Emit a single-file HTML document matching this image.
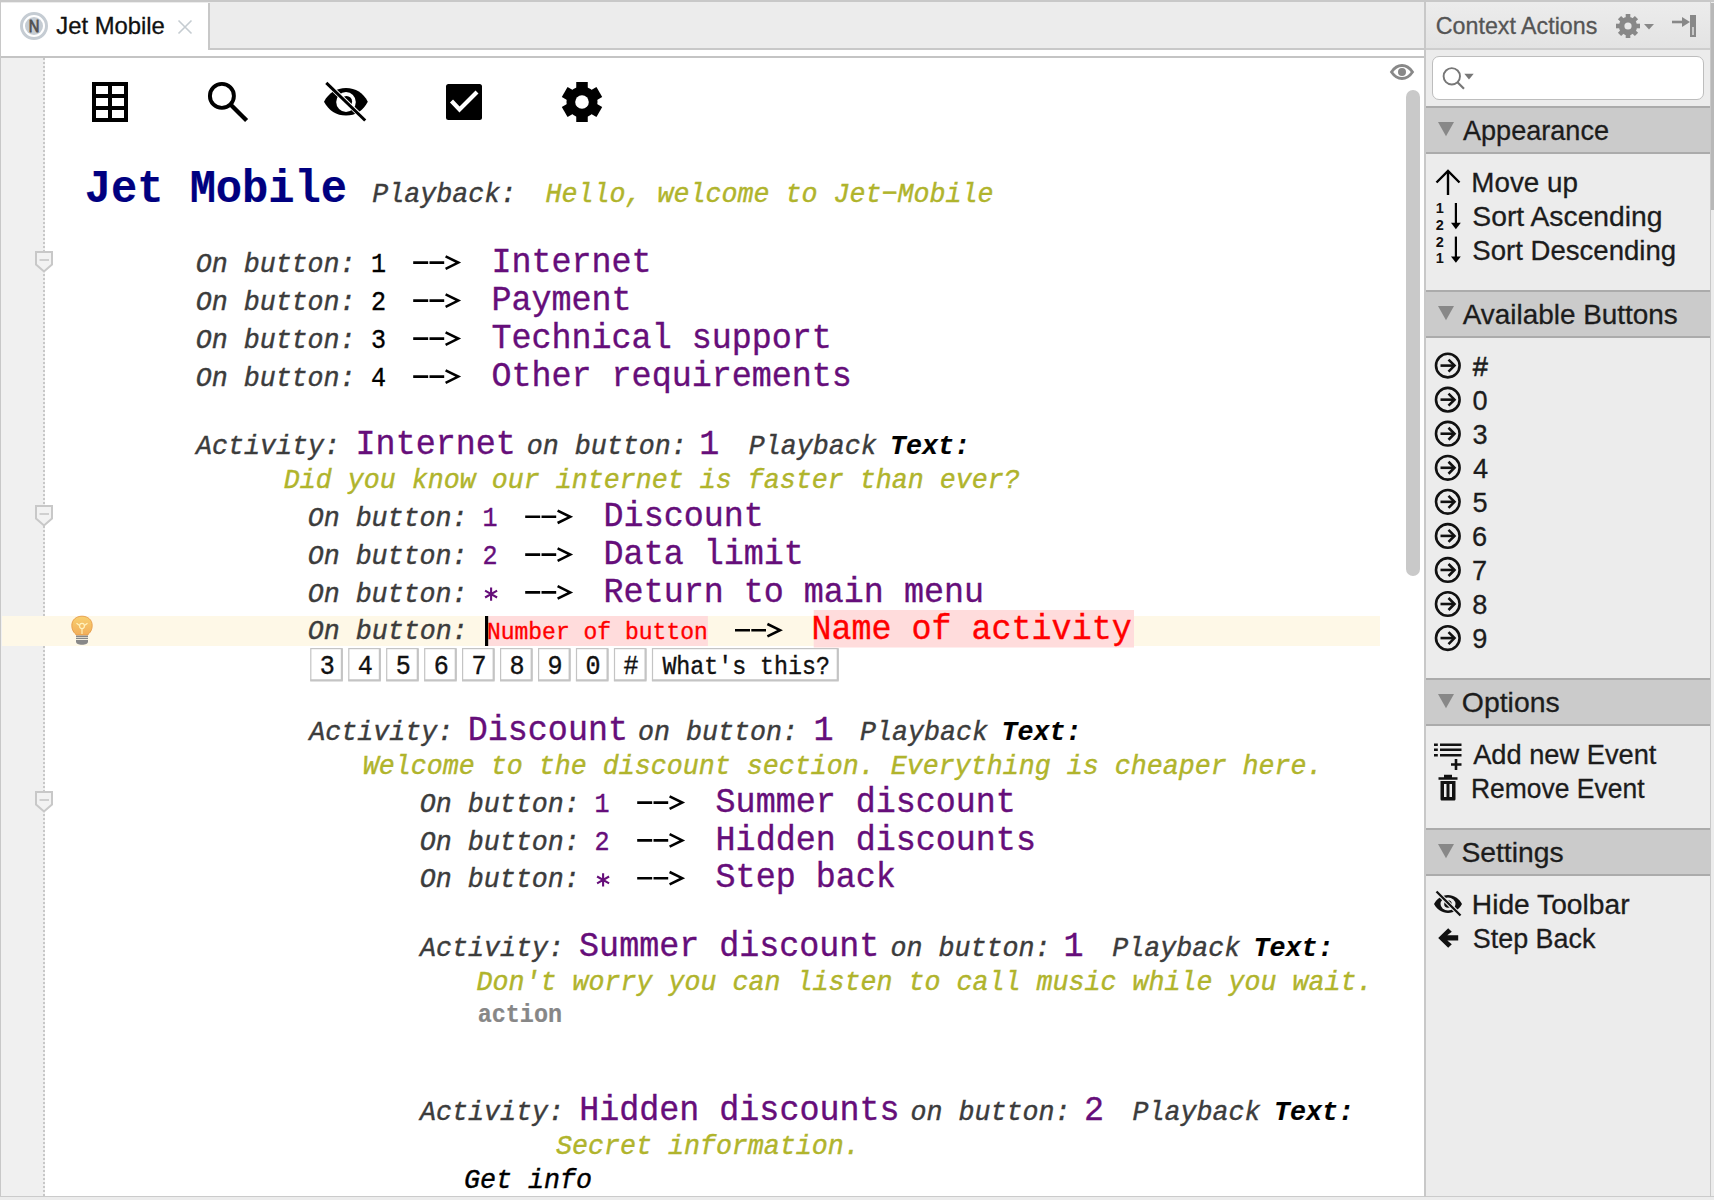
<!DOCTYPE html>
<html><head><meta charset="utf-8"><title>Jet Mobile</title>
<style>
html,body{margin:0;padding:0;}
body{width:1714px;height:1200px;position:relative;overflow:hidden;background:#ececec;font-family:"Liberation Sans",sans-serif;}
.abs{position:absolute;}
svg{position:absolute;left:0;top:0;}
text{white-space:pre;}
.m{font-family:"Liberation Mono",monospace;}
.mi{font-family:"Liberation Mono",monospace;font-style:italic;}
.mb{font-family:"Liberation Mono",monospace;font-weight:bold;}
.mbi{font-family:"Liberation Mono",monospace;font-weight:bold;font-style:italic;}
.s{font-family:"Liberation Sans",sans-serif;}
.sb{font-family:"Liberation Sans",sans-serif;font-weight:bold;}
</style></head>
<body>

<div class="abs" style="left:0;top:0;width:1714px;height:2px;background:#c8c8c8"></div>
<div class="abs" style="left:0;top:0;width:1px;height:1197px;background:#c8c8c8"></div>
<div class="abs" style="left:210px;top:48px;width:1214px;height:2px;background:#c8c8c8"></div>
<div class="abs" style="left:1px;top:3px;width:207px;height:53px;background:#fff"></div>
<div class="abs" style="left:208px;top:3px;width:2px;height:47px;background:#c8c8c8"></div>
<div class="abs" style="left:1px;top:50px;width:1423px;height:6px;background:#fff"></div>
<div class="abs" style="left:1px;top:56px;width:1423px;height:2px;background:#c4c4c4"></div>
<div class="abs" style="left:1px;top:58px;width:44px;height:1138px;background:#f0f0f0"></div>
<div class="abs" style="left:45px;top:58px;width:1379px;height:1138px;background:#fff"></div>
<div class="abs" style="left:0;top:1196px;width:1714px;height:1px;background:#cbcbcb"></div>
<div class="abs" style="left:1424px;top:2px;width:2px;height:1195px;background:#c8c8c8"></div>
<div class="abs" style="left:1426px;top:3px;width:284px;height:45px;background:linear-gradient(#ececec,#e3e3e3)"></div>
<div class="abs" style="left:1426px;top:48px;width:284px;height:2px;background:#cdcdcd"></div>
<div class="abs" style="left:1710px;top:2px;width:1px;height:1195px;background:#c8c8c8"></div>
<div class="abs" style="left:1711px;top:3px;width:3px;height:207px;background:#b8b8b8"></div>

<svg width="1714" height="1200" viewBox="0 0 1714 1200">
<line x1="44" y1="58" x2="44" y2="1196" stroke="#c8c8c8" stroke-width="2" stroke-dasharray="2 2"/>
<rect x="2" y="616" width="1378" height="30" fill="#fef8e7"/>
<rect x="488.5" y="616" width="219.4" height="30" fill="#ffdcdc"/>
<rect x="813.7" y="610" width="320.3" height="37.5" fill="#ffdcdc"/>
<rect x="485" y="616" width="3.2" height="30" fill="#000"/>
<rect x="310.8" y="648.6" width="31.4" height="31.5" fill="#fff" stroke="#c4c4c4" stroke-width="1.2"/>
<path d="M341.8 649V680.6H310.2" stroke="#c4c4c4" stroke-width="2" fill="none"/>
<rect x="348.8" y="648.6" width="31.4" height="31.5" fill="#fff" stroke="#c4c4c4" stroke-width="1.2"/>
<path d="M379.8 649V680.6H348.2" stroke="#c4c4c4" stroke-width="2" fill="none"/>
<rect x="386.7" y="648.6" width="31.4" height="31.5" fill="#fff" stroke="#c4c4c4" stroke-width="1.2"/>
<path d="M417.7 649V680.6H386.1" stroke="#c4c4c4" stroke-width="2" fill="none"/>
<rect x="424.7" y="648.6" width="31.4" height="31.5" fill="#fff" stroke="#c4c4c4" stroke-width="1.2"/>
<path d="M455.7 649V680.6H424.1" stroke="#c4c4c4" stroke-width="2" fill="none"/>
<rect x="462.6" y="648.6" width="31.4" height="31.5" fill="#fff" stroke="#c4c4c4" stroke-width="1.2"/>
<path d="M493.6 649V680.6H462.0" stroke="#c4c4c4" stroke-width="2" fill="none"/>
<rect x="500.6" y="648.6" width="31.4" height="31.5" fill="#fff" stroke="#c4c4c4" stroke-width="1.2"/>
<path d="M531.6 649V680.6H500.0" stroke="#c4c4c4" stroke-width="2" fill="none"/>
<rect x="538.6" y="648.6" width="31.4" height="31.5" fill="#fff" stroke="#c4c4c4" stroke-width="1.2"/>
<path d="M569.6 649V680.6H538.0" stroke="#c4c4c4" stroke-width="2" fill="none"/>
<rect x="576.5" y="648.6" width="31.4" height="31.5" fill="#fff" stroke="#c4c4c4" stroke-width="1.2"/>
<path d="M607.5 649V680.6H575.9" stroke="#c4c4c4" stroke-width="2" fill="none"/>
<rect x="614.5" y="648.6" width="31.4" height="31.5" fill="#fff" stroke="#c4c4c4" stroke-width="1.2"/>
<path d="M645.5 649V680.6H613.9" stroke="#c4c4c4" stroke-width="2" fill="none"/>
<rect x="652.5" y="648.6" width="185.6" height="31.5" fill="#fff" stroke="#c4c4c4" stroke-width="1.2"/>
<path d="M837.7 649V680.6H651.9" stroke="#c4c4c4" stroke-width="2" fill="none"/>
<path d="M36 252.0H52V264.5L44 271.5L36 264.5Z" fill="#f2f2f2" stroke="#c8c8c8" stroke-width="2"/>
<rect x="39.5" y="259.0" width="9.5" height="2" fill="#cfcfcf"/>
<path d="M36 506.0H52V518.5L44 525.5L36 518.5Z" fill="#f2f2f2" stroke="#c8c8c8" stroke-width="2"/>
<rect x="39.5" y="513.0" width="9.5" height="2" fill="#cfcfcf"/>
<path d="M36 792.0H52V804.5L44 811.5L36 804.5Z" fill="#f2f2f2" stroke="#c8c8c8" stroke-width="2"/>
<rect x="39.5" y="799.0" width="9.5" height="2" fill="#cfcfcf"/>
<g>
<defs><linearGradient id="bulb" x1="0" y1="0" x2="0" y2="1"><stop offset="0" stop-color="#f8d070"/><stop offset="1" stop-color="#f2ae5a"/></linearGradient></defs>
<path d="M76 634.5C72.5 631.5 71.8 628 71.8 625.5C71.8 619.8 76.2 616.2 82 616.2C87.8 616.2 92.2 619.8 92.2 625.5C92.2 628 91.5 631.5 88 634.5L88 635H76Z" fill="url(#bulb)" stroke="#e59a45" stroke-width="0.9"/>
<path d="M76.5 623.2L79.6 625.5M87.5 623.2L84.4 625.5M82 629V634" stroke="#fff4c0" stroke-width="1.1" fill="none"/>
<ellipse cx="82" cy="626" rx="2.4" ry="2.6" fill="none" stroke="#fff4c0" stroke-width="1.1"/>
<rect x="76" y="635.6" width="12" height="1.4" fill="#888"/>
<rect x="76" y="637.7" width="12" height="1.4" fill="#888"/>
<path d="M76 640H88V641.5C88 643.6 85.5 644.8 82 644.8C78.5 644.8 76 643.6 76 641.5Z" fill="#888"/>
</g>
<path fill-rule="evenodd" fill="#000" d="M92 82H128V122H92ZM96 86V94H108V86ZM112 86V94H124V86ZM96 98V106H108V98ZM112 98V106H124V98ZM96 110V118H108V110ZM112 110V118H124V110Z"/>
<circle cx="221.9" cy="95.9" r="12" fill="none" stroke="#000" stroke-width="3.9"/>
<path d="M230 104L246.6 120.6" stroke="#000" stroke-width="4.3"/>
<g>
<defs><clipPath id="eoclip"><path d="M276 34L420 34L420 173.6Z"/></clipPath></defs>
<path d="M324 101.7C328.5 93 336.5 88 346 88C355.5 88 363.5 93 367.8 101.7C363.5 110.5 355.5 115.5 346 115.5C336.5 115.5 328.5 110.5 324 101.7Z" fill="#000"/>
<ellipse cx="346" cy="102" rx="9.8" ry="10" fill="#fff"/>
<circle cx="346.5" cy="101.5" r="5.6" fill="#000" clip-path="url(#eoclip)"/>
<path d="M325.5 82L366 121" stroke="#fff" stroke-width="4.6"/>
<path d="M326.3 82.8L365.2 120.5" stroke="#000" stroke-width="3"/>
</g>
<rect x="446" y="84" width="36" height="36" rx="2.5" fill="#000"/>
<path d="M451.5 101L459.5 109.5L477 92" stroke="#fff" stroke-width="4.2" fill="none"/>
<circle cx="582.00" cy="102.00" r="15.50" fill="#000"/>
<rect x="576.25" y="82.00" width="11.50" height="6.50" fill="#000" transform="rotate(0.00 582.00 102.00)"/>
<rect x="576.25" y="82.00" width="11.50" height="6.50" fill="#000" transform="rotate(60.00 582.00 102.00)"/>
<rect x="576.25" y="82.00" width="11.50" height="6.50" fill="#000" transform="rotate(120.00 582.00 102.00)"/>
<rect x="576.25" y="82.00" width="11.50" height="6.50" fill="#000" transform="rotate(180.00 582.00 102.00)"/>
<rect x="576.25" y="82.00" width="11.50" height="6.50" fill="#000" transform="rotate(240.00 582.00 102.00)"/>
<rect x="576.25" y="82.00" width="11.50" height="6.50" fill="#000" transform="rotate(300.00 582.00 102.00)"/>
<circle cx="582.00" cy="102.00" r="6.80" fill="#fff"/>
<path d="M1391.5 72C1394.5 67.5 1398 65.5 1402 65.5C1406 65.5 1409.5 67.5 1412.5 72C1409.5 76.5 1406 78.5 1402 78.5C1398 78.5 1394.5 76.5 1391.5 72Z" fill="none" stroke="#888" stroke-width="2.8"/>
<circle cx="1402" cy="72" r="4" fill="#888"/>
<rect x="1406" y="90" width="14" height="486" rx="7" fill="#c9c9c9"/>
<circle cx="1628.00" cy="26.00" r="9.20" fill="#888"/>
<rect x="1625.70" y="14.00" width="4.60" height="4.80" fill="#888" transform="rotate(0.00 1628.00 26.00)"/>
<rect x="1625.70" y="14.00" width="4.60" height="4.80" fill="#888" transform="rotate(45.00 1628.00 26.00)"/>
<rect x="1625.70" y="14.00" width="4.60" height="4.80" fill="#888" transform="rotate(90.00 1628.00 26.00)"/>
<rect x="1625.70" y="14.00" width="4.60" height="4.80" fill="#888" transform="rotate(135.00 1628.00 26.00)"/>
<rect x="1625.70" y="14.00" width="4.60" height="4.80" fill="#888" transform="rotate(180.00 1628.00 26.00)"/>
<rect x="1625.70" y="14.00" width="4.60" height="4.80" fill="#888" transform="rotate(225.00 1628.00 26.00)"/>
<rect x="1625.70" y="14.00" width="4.60" height="4.80" fill="#888" transform="rotate(270.00 1628.00 26.00)"/>
<rect x="1625.70" y="14.00" width="4.60" height="4.80" fill="#888" transform="rotate(315.00 1628.00 26.00)"/>
<circle cx="1628.00" cy="26.00" r="3.60" fill="#e8e8e8"/>
<path d="M1644 24H1654L1649 29.5Z" fill="#888"/>
<path d="M1672 22H1684" stroke="#888" stroke-width="2.6"/>
<path d="M1682 17L1690 22L1682 27Z" fill="#888"/>
<path fill-rule="evenodd" fill="#888" d="M1690 15H1696V37H1690ZM1692.3 27V35H1693.7V27Z"/>
<rect x="1432.5" y="56.5" width="271" height="43" rx="6.5" fill="#fff" stroke="#bdbdbd" stroke-width="1"/>
<circle cx="1451.8" cy="76.3" r="8.2" fill="none" stroke="#777" stroke-width="1.9"/>
<path d="M1457.5 82.3L1464 88.8" stroke="#777" stroke-width="2.2"/>
<path d="M1464.3 73.8H1473.7L1469 79.5Z" fill="#777"/>
<rect x="1426" y="106" width="284" height="48" fill="#cbcbcb"/>
<rect x="1426" y="106" width="284" height="2" fill="#ababab"/>
<rect x="1426" y="152" width="284" height="2" fill="#ababab"/>
<path d="M1438 122.0H1454L1446 136.3Z" fill="#888"/>
<rect x="1426" y="290" width="284" height="48" fill="#cbcbcb"/>
<rect x="1426" y="290" width="284" height="2" fill="#ababab"/>
<rect x="1426" y="336" width="284" height="2" fill="#ababab"/>
<path d="M1438 306.0H1454L1446 320.3Z" fill="#888"/>
<rect x="1426" y="678" width="284" height="48" fill="#cbcbcb"/>
<rect x="1426" y="678" width="284" height="2" fill="#ababab"/>
<rect x="1426" y="724" width="284" height="2" fill="#ababab"/>
<path d="M1438 694.0H1454L1446 708.3Z" fill="#888"/>
<rect x="1426" y="828" width="284" height="48" fill="#cbcbcb"/>
<rect x="1426" y="828" width="284" height="2" fill="#ababab"/>
<rect x="1426" y="874" width="284" height="2" fill="#ababab"/>
<path d="M1438 844.0H1454L1446 858.3Z" fill="#888"/>
<path d="M1448 171V195" stroke="#000" stroke-width="2.4"/>
<path d="M1436.5 182.5L1448 171L1459.5 182.5" stroke="#000" stroke-width="2.4" fill="none"/>
<text class="sb" x="1435.8" y="213.1" font-size="14.5" fill="#111">1</text>
<text class="sb" x="1435.8" y="229.6" font-size="14.5" fill="#111">2</text>
<path d="M1455.9 203.0V224.0" stroke="#000" stroke-width="2.2"/>
<path d="M1451 222.8H1460.8L1455.9 229.2Z" fill="#000"/>
<text class="sb" x="1435.8" y="246.7" font-size="14.5" fill="#111">2</text>
<text class="sb" x="1435.8" y="263.2" font-size="14.5" fill="#111">1</text>
<path d="M1455.9 236.6V257.6" stroke="#000" stroke-width="2.2"/>
<path d="M1451 256.4H1460.8L1455.9 262.8Z" fill="#000"/>
<circle cx="1447.8" cy="365.60" r="11.8" fill="none" stroke="#111" stroke-width="2.6"/>
<path d="M1440.5 365.60H1454" stroke="#111" stroke-width="2.6"/>
<path d="M1448.5 359.60L1454.5 365.60L1448.5 371.60" stroke="#111" stroke-width="2.6" fill="none"/>
<circle cx="1447.8" cy="399.66" r="11.8" fill="none" stroke="#111" stroke-width="2.6"/>
<path d="M1440.5 399.66H1454" stroke="#111" stroke-width="2.6"/>
<path d="M1448.5 393.66L1454.5 399.66L1448.5 405.66" stroke="#111" stroke-width="2.6" fill="none"/>
<circle cx="1447.8" cy="433.72" r="11.8" fill="none" stroke="#111" stroke-width="2.6"/>
<path d="M1440.5 433.72H1454" stroke="#111" stroke-width="2.6"/>
<path d="M1448.5 427.72L1454.5 433.72L1448.5 439.72" stroke="#111" stroke-width="2.6" fill="none"/>
<circle cx="1447.8" cy="467.78" r="11.8" fill="none" stroke="#111" stroke-width="2.6"/>
<path d="M1440.5 467.78H1454" stroke="#111" stroke-width="2.6"/>
<path d="M1448.5 461.78L1454.5 467.78L1448.5 473.78" stroke="#111" stroke-width="2.6" fill="none"/>
<circle cx="1447.8" cy="501.84" r="11.8" fill="none" stroke="#111" stroke-width="2.6"/>
<path d="M1440.5 501.84H1454" stroke="#111" stroke-width="2.6"/>
<path d="M1448.5 495.84L1454.5 501.84L1448.5 507.84" stroke="#111" stroke-width="2.6" fill="none"/>
<circle cx="1447.8" cy="535.90" r="11.8" fill="none" stroke="#111" stroke-width="2.6"/>
<path d="M1440.5 535.90H1454" stroke="#111" stroke-width="2.6"/>
<path d="M1448.5 529.90L1454.5 535.90L1448.5 541.90" stroke="#111" stroke-width="2.6" fill="none"/>
<circle cx="1447.8" cy="569.96" r="11.8" fill="none" stroke="#111" stroke-width="2.6"/>
<path d="M1440.5 569.96H1454" stroke="#111" stroke-width="2.6"/>
<path d="M1448.5 563.96L1454.5 569.96L1448.5 575.96" stroke="#111" stroke-width="2.6" fill="none"/>
<circle cx="1447.8" cy="604.02" r="11.8" fill="none" stroke="#111" stroke-width="2.6"/>
<path d="M1440.5 604.02H1454" stroke="#111" stroke-width="2.6"/>
<path d="M1448.5 598.02L1454.5 604.02L1448.5 610.02" stroke="#111" stroke-width="2.6" fill="none"/>
<circle cx="1447.8" cy="638.08" r="11.8" fill="none" stroke="#111" stroke-width="2.6"/>
<path d="M1440.5 638.08H1454" stroke="#111" stroke-width="2.6"/>
<path d="M1448.5 632.08L1454.5 638.08L1448.5 644.08" stroke="#111" stroke-width="2.6" fill="none"/>
<path d="M1434 744.7H1437.8M1434 749.7H1437.8M1434 755.2H1437.8" stroke="#111" stroke-width="2.6"/>
<path d="M1440 744.7H1461.5M1440 749.7H1461.5M1440 755.2H1461.5" stroke="#111" stroke-width="2.6"/>
<path d="M1451 764.5H1461.5M1456 759V770" stroke="#111" stroke-width="2.6"/>
<path d="M1438.5 778.5H1457.5M1444 776H1452" stroke="#111" stroke-width="2.4"/>
<path fill-rule="evenodd" fill="#111" d="M1440.5 781H1455.5V799C1455.5 800 1454.8 800.5 1454 800.5H1442C1441.2 800.5 1440.5 800 1440.5 799ZM1444 784V797H1446.5V784ZM1449.5 784V797H1452V784Z"/>
<g>
<path d="M1434 904C1437 898.5 1442 895 1448 895C1454 895 1459 898.5 1462 904C1459 909.5 1454 913 1448 913C1442 913 1437 909.5 1434 904Z" fill="#111"/>
<ellipse cx="1448" cy="904" rx="7.5" ry="6.5" fill="#ececec"/>
<circle cx="1448" cy="904" r="3.8" fill="#111"/>
<path d="M1436 891L1461 916" stroke="#ececec" stroke-width="4.5"/>
<path d="M1436.5 891.5L1460.5 915.5" stroke="#111" stroke-width="2.3"/>
</g>
<path d="M1438.2 938L1448.2 928.3L1451.8 931.8L1447.3 935.3H1458.2V940.6H1447.3L1451.8 944.2L1448.2 947.8Z" fill="#111"/>
<circle cx="34" cy="26" r="12.5" fill="none" stroke="#c5ccd3" stroke-width="3"/>
<circle cx="34" cy="26" r="9" fill="#c5ccd3"/>
<text class="s" x="34" y="31.9" font-size="17.4" fill="#505050" stroke="#505050" stroke-width="0.8" text-anchor="middle" transform="matrix(0.85,0,0,1,5.1,0)">N</text>
<path d="M178.5 20.5L191.5 33.5M191.5 20.5L178.5 33.5" stroke="#c5ccd1" stroke-width="1.6"/>
<text class="mb" x="84.68" y="202.00" font-size="43.74" fill="#000080" transform="matrix(1,0,0,1.0700,0,-14.140)" stroke="#000080" stroke-width="0.20">Jet Mobile</text>
<text class="mi" x="372.34" y="202.20" font-size="26.67" fill="#3c3c3c" transform="matrix(1,0,0,1.0700,0,-14.154)" stroke="#3c3c3c" stroke-width="0.40">Playback:</text>
<text class="mi" x="545.60" y="202.20" font-size="26.67" fill="#b0b42c" transform="matrix(1,0,0,1.0700,0,-14.154)" stroke="#b0b42c" stroke-width="0.40">Hello, welcome to Jet−Mobile</text>
<text class="mi" x="195.64" y="271.90" font-size="26.67" fill="#3c3c3c" transform="matrix(1,0,0,1.0700,0,-19.033)" stroke="#3c3c3c" stroke-width="0.40">On button:</text>
<text class="m" x="371.00" y="271.90" font-size="25.08" fill="#000000" transform="matrix(1,0,0,1.0700,0,-19.033)" stroke="#000000" stroke-width="0.35">1</text>
<path d="M413.2 262.6H428.2M429.5 262.6H444.2" stroke="#000" stroke-width="2.6" fill="none"/>
<path d="M445.6 256.4L458.2 262.6L445.6 268.8" stroke="#000" stroke-width="2.6" fill="none" stroke-linejoin="miter"/>
<text class="m" x="491.50" y="271.90" font-size="33.38" fill="#660e7a" transform="matrix(1,0,0,1.0700,0,-19.033)" stroke="#660e7a" stroke-width="0.35">Internet</text>
<text class="mi" x="195.64" y="309.90" font-size="26.67" fill="#3c3c3c" transform="matrix(1,0,0,1.0700,0,-21.693)" stroke="#3c3c3c" stroke-width="0.40">On button:</text>
<text class="m" x="371.00" y="309.90" font-size="25.08" fill="#000000" transform="matrix(1,0,0,1.0700,0,-21.693)" stroke="#000000" stroke-width="0.35">2</text>
<path d="M413.2 300.6H428.2M429.5 300.6H444.2" stroke="#000" stroke-width="2.6" fill="none"/>
<path d="M445.6 294.4L458.2 300.6L445.6 306.8" stroke="#000" stroke-width="2.6" fill="none" stroke-linejoin="miter"/>
<text class="m" x="491.50" y="309.90" font-size="33.38" fill="#660e7a" transform="matrix(1,0,0,1.0700,0,-21.693)" stroke="#660e7a" stroke-width="0.35">Payment</text>
<text class="mi" x="195.64" y="347.90" font-size="26.67" fill="#3c3c3c" transform="matrix(1,0,0,1.0700,0,-24.353)" stroke="#3c3c3c" stroke-width="0.40">On button:</text>
<text class="m" x="371.00" y="347.90" font-size="25.08" fill="#000000" transform="matrix(1,0,0,1.0700,0,-24.353)" stroke="#000000" stroke-width="0.35">3</text>
<path d="M413.2 338.6H428.2M429.5 338.6H444.2" stroke="#000" stroke-width="2.6" fill="none"/>
<path d="M445.6 332.4L458.2 338.6L445.6 344.8" stroke="#000" stroke-width="2.6" fill="none" stroke-linejoin="miter"/>
<text class="m" x="491.50" y="347.90" font-size="33.38" fill="#660e7a" transform="matrix(1,0,0,1.0700,0,-24.353)" stroke="#660e7a" stroke-width="0.35">Technical support</text>
<text class="mi" x="195.64" y="385.90" font-size="26.67" fill="#3c3c3c" transform="matrix(1,0,0,1.0700,0,-27.013)" stroke="#3c3c3c" stroke-width="0.40">On button:</text>
<text class="m" x="371.00" y="385.90" font-size="25.08" fill="#000000" transform="matrix(1,0,0,1.0700,0,-27.013)" stroke="#000000" stroke-width="0.35">4</text>
<path d="M413.2 376.6H428.2M429.5 376.6H444.2" stroke="#000" stroke-width="2.6" fill="none"/>
<path d="M445.6 370.4L458.2 376.6L445.6 382.8" stroke="#000" stroke-width="2.6" fill="none" stroke-linejoin="miter"/>
<text class="m" x="491.50" y="385.90" font-size="33.38" fill="#660e7a" transform="matrix(1,0,0,1.0700,0,-27.013)" stroke="#660e7a" stroke-width="0.35">Other requirements</text>
<text class="mi" x="195.90" y="453.60" font-size="26.67" fill="#3c3c3c" transform="matrix(1,0,0,1.0700,0,-31.752)" stroke="#3c3c3c" stroke-width="0.40">Activity:</text>
<text class="m" x="355.60" y="453.60" font-size="33.38" fill="#660e7a" transform="matrix(1,0,0,1.0700,0,-31.752)" stroke="#660e7a" stroke-width="0.35">Internet</text>
<text class="mi" x="526.70" y="453.60" font-size="26.67" fill="#3c3c3c" transform="matrix(1,0,0,1.0700,0,-31.752)" stroke="#3c3c3c" stroke-width="0.40">on button:</text>
<text class="m" x="699.20" y="453.60" font-size="33.38" fill="#660e7a" transform="matrix(1,0,0,1.0700,0,-31.752)" stroke="#660e7a" stroke-width="0.35">1</text>
<text class="mi" x="748.70" y="453.60" font-size="26.67" fill="#3c3c3c" transform="matrix(1,0,0,1.0700,0,-31.752)" stroke="#3c3c3c" stroke-width="0.40">Playback</text>
<text class="mbi" x="890.10" y="453.60" font-size="26.67" fill="#000000" transform="matrix(1,0,0,1.0700,0,-31.752)" stroke="#000000" stroke-width="0.20">Text:</text>
<text class="mi" x="283.80" y="488.10" font-size="26.67" fill="#b0b42c" transform="matrix(1,0,0,1.0700,0,-34.167)" stroke="#b0b42c" stroke-width="0.40">Did you know our internet is faster than ever?</text>
<text class="mi" x="307.64" y="526.10" font-size="26.67" fill="#3c3c3c" transform="matrix(1,0,0,1.0700,0,-36.827)" stroke="#3c3c3c" stroke-width="0.40">On button:</text>
<text class="m" x="482.60" y="526.10" font-size="25.08" fill="#660e7a" transform="matrix(1,0,0,1.0700,0,-36.827)" stroke="#660e7a" stroke-width="0.35">1</text>
<path d="M525.2 516.8H540.2M541.5 516.8H556.2" stroke="#000" stroke-width="2.6" fill="none"/>
<path d="M557.6 510.6L570.2 516.8L557.6 523.0" stroke="#000" stroke-width="2.6" fill="none" stroke-linejoin="miter"/>
<text class="m" x="603.60" y="526.10" font-size="33.38" fill="#660e7a" transform="matrix(1,0,0,1.0700,0,-36.827)" stroke="#660e7a" stroke-width="0.35">Discount</text>
<text class="mi" x="307.64" y="563.90" font-size="26.67" fill="#3c3c3c" transform="matrix(1,0,0,1.0700,0,-39.473)" stroke="#3c3c3c" stroke-width="0.40">On button:</text>
<text class="m" x="482.60" y="563.90" font-size="25.08" fill="#660e7a" transform="matrix(1,0,0,1.0700,0,-39.473)" stroke="#660e7a" stroke-width="0.35">2</text>
<path d="M525.2 554.6H540.2M541.5 554.6H556.2" stroke="#000" stroke-width="2.6" fill="none"/>
<path d="M557.6 548.4L570.2 554.6L557.6 560.8" stroke="#000" stroke-width="2.6" fill="none" stroke-linejoin="miter"/>
<text class="m" x="603.60" y="563.90" font-size="33.38" fill="#660e7a" transform="matrix(1,0,0,1.0700,0,-39.473)" stroke="#660e7a" stroke-width="0.35">Data limit</text>
<text class="mi" x="307.64" y="601.70" font-size="26.67" fill="#3c3c3c" transform="matrix(1,0,0,1.0700,0,-42.119)" stroke="#3c3c3c" stroke-width="0.40">On button:</text>
<path d="M491.10 587.50V600.70M485.10 590.70L497.10 597.50M485.10 597.50L497.10 590.70" stroke="#660e7a" stroke-width="2.1" fill="none"/>
<path d="M525.2 592.4H540.2M541.5 592.4H556.2" stroke="#000" stroke-width="2.6" fill="none"/>
<path d="M557.6 586.2L570.2 592.4L557.6 598.6" stroke="#000" stroke-width="2.6" fill="none" stroke-linejoin="miter"/>
<text class="m" x="603.60" y="601.70" font-size="33.38" fill="#660e7a" transform="matrix(1,0,0,1.0700,0,-42.119)" stroke="#660e7a" stroke-width="0.35">Return to main menu</text>
<text class="mi" x="307.84" y="639.20" font-size="26.67" fill="#3c3c3c" transform="matrix(1,0,0,1.0700,0,-44.744)" stroke="#3c3c3c" stroke-width="0.40">On button:</text>
<text class="m" x="486.90" y="639.20" font-size="23.02" fill="#ff0000" transform="matrix(1,0,0,1.0700,0,-44.744)" stroke="#ff0000" stroke-width="0.35">Number of button</text>
<path d="M735.0 630.2H750.0M751.3 630.2H766.0" stroke="#000" stroke-width="2.6" fill="none"/>
<path d="M767.4 624.0L780.0 630.2L767.4 636.4" stroke="#000" stroke-width="2.6" fill="none" stroke-linejoin="miter"/>
<text class="m" x="811.40" y="639.20" font-size="33.38" fill="#ff0000" transform="matrix(1,0,0,1.0700,0,-44.744)" stroke="#ff0000" stroke-width="0.35">Name of activity</text>
<text class="m" x="319.78" y="674.00" font-size="25.08" fill="#111" transform="matrix(1,0,0,1.0700,0,-47.180)" stroke="#111" stroke-width="0.35">3</text>
<text class="m" x="357.74" y="674.00" font-size="25.08" fill="#111" transform="matrix(1,0,0,1.0700,0,-47.180)" stroke="#111" stroke-width="0.35">4</text>
<text class="m" x="395.70" y="674.00" font-size="25.08" fill="#111" transform="matrix(1,0,0,1.0700,0,-47.180)" stroke="#111" stroke-width="0.35">5</text>
<text class="m" x="433.66" y="674.00" font-size="25.08" fill="#111" transform="matrix(1,0,0,1.0700,0,-47.180)" stroke="#111" stroke-width="0.35">6</text>
<text class="m" x="471.62" y="674.00" font-size="25.08" fill="#111" transform="matrix(1,0,0,1.0700,0,-47.180)" stroke="#111" stroke-width="0.35">7</text>
<text class="m" x="509.57" y="674.00" font-size="25.08" fill="#111" transform="matrix(1,0,0,1.0700,0,-47.180)" stroke="#111" stroke-width="0.35">8</text>
<text class="m" x="547.53" y="674.00" font-size="25.08" fill="#111" transform="matrix(1,0,0,1.0700,0,-47.180)" stroke="#111" stroke-width="0.35">9</text>
<text class="m" x="585.50" y="674.00" font-size="25.08" fill="#111" transform="matrix(1,0,0,1.0700,0,-47.180)" stroke="#111" stroke-width="0.35">0</text>
<text class="m" x="623.45" y="674.00" font-size="25.08" fill="#111" transform="matrix(1,0,0,1.0700,0,-47.180)" stroke="#111" stroke-width="0.35">#</text>
<text class="m" x="662.40" y="674.00" font-size="23.28" fill="#111" transform="matrix(1,0,0,1.0700,0,-47.180)" stroke="#111" stroke-width="0.35">What&#x27;s this?</text>
<text class="mi" x="309.20" y="739.70" font-size="26.67" fill="#3c3c3c" transform="matrix(1,0,0,1.0700,0,-51.779)" stroke="#3c3c3c" stroke-width="0.40">Activity:</text>
<text class="m" x="467.80" y="739.70" font-size="33.38" fill="#660e7a" transform="matrix(1,0,0,1.0700,0,-51.779)" stroke="#660e7a" stroke-width="0.35">Discount</text>
<text class="mi" x="638.10" y="739.70" font-size="26.67" fill="#3c3c3c" transform="matrix(1,0,0,1.0700,0,-51.779)" stroke="#3c3c3c" stroke-width="0.40">on button:</text>
<text class="m" x="813.40" y="739.70" font-size="33.38" fill="#660e7a" transform="matrix(1,0,0,1.0700,0,-51.779)" stroke="#660e7a" stroke-width="0.35">1</text>
<text class="mi" x="860.10" y="739.70" font-size="26.67" fill="#3c3c3c" transform="matrix(1,0,0,1.0700,0,-51.779)" stroke="#3c3c3c" stroke-width="0.40">Playback</text>
<text class="mbi" x="1001.50" y="739.70" font-size="26.67" fill="#000000" transform="matrix(1,0,0,1.0700,0,-51.779)" stroke="#000000" stroke-width="0.20">Text:</text>
<text class="mi" x="362.70" y="774.40" font-size="26.67" fill="#b0b42c" transform="matrix(1,0,0,1.0700,0,-54.208)" stroke="#b0b42c" stroke-width="0.40">Welcome to the discount section. Everything is cheaper here.</text>
<text class="mi" x="419.74" y="811.90" font-size="26.67" fill="#3c3c3c" transform="matrix(1,0,0,1.0700,0,-56.833)" stroke="#3c3c3c" stroke-width="0.40">On button:</text>
<text class="m" x="594.60" y="811.90" font-size="25.08" fill="#660e7a" transform="matrix(1,0,0,1.0700,0,-56.833)" stroke="#660e7a" stroke-width="0.35">1</text>
<path d="M637.2 802.6H652.2M653.5 802.6H668.2" stroke="#000" stroke-width="2.6" fill="none"/>
<path d="M669.6 796.4L682.2 802.6L669.6 808.8" stroke="#000" stroke-width="2.6" fill="none" stroke-linejoin="miter"/>
<text class="m" x="715.60" y="811.90" font-size="33.38" fill="#660e7a" transform="matrix(1,0,0,1.0700,0,-56.833)" stroke="#660e7a" stroke-width="0.35">Summer discount</text>
<text class="mi" x="419.74" y="849.70" font-size="26.67" fill="#3c3c3c" transform="matrix(1,0,0,1.0700,0,-59.479)" stroke="#3c3c3c" stroke-width="0.40">On button:</text>
<text class="m" x="594.60" y="849.70" font-size="25.08" fill="#660e7a" transform="matrix(1,0,0,1.0700,0,-59.479)" stroke="#660e7a" stroke-width="0.35">2</text>
<path d="M637.2 840.4H652.2M653.5 840.4H668.2" stroke="#000" stroke-width="2.6" fill="none"/>
<path d="M669.6 834.2L682.2 840.4L669.6 846.6" stroke="#000" stroke-width="2.6" fill="none" stroke-linejoin="miter"/>
<text class="m" x="715.60" y="849.70" font-size="33.38" fill="#660e7a" transform="matrix(1,0,0,1.0700,0,-59.479)" stroke="#660e7a" stroke-width="0.35">Hidden discounts</text>
<text class="mi" x="419.74" y="887.50" font-size="26.67" fill="#3c3c3c" transform="matrix(1,0,0,1.0700,0,-62.125)" stroke="#3c3c3c" stroke-width="0.40">On button:</text>
<path d="M603.10 873.30V886.50M597.10 876.50L609.10 883.30M597.10 883.30L609.10 876.50" stroke="#660e7a" stroke-width="2.1" fill="none"/>
<path d="M637.2 878.2H652.2M653.5 878.2H668.2" stroke="#000" stroke-width="2.6" fill="none"/>
<path d="M669.6 872.0L682.2 878.2L669.6 884.4" stroke="#000" stroke-width="2.6" fill="none" stroke-linejoin="miter"/>
<text class="m" x="715.60" y="887.50" font-size="33.38" fill="#660e7a" transform="matrix(1,0,0,1.0700,0,-62.125)" stroke="#660e7a" stroke-width="0.35">Step back</text>
<text class="mi" x="420.10" y="955.70" font-size="26.67" fill="#3c3c3c" transform="matrix(1,0,0,1.0700,0,-66.899)" stroke="#3c3c3c" stroke-width="0.40">Activity:</text>
<text class="m" x="579.10" y="955.70" font-size="33.38" fill="#660e7a" transform="matrix(1,0,0,1.0700,0,-66.899)" stroke="#660e7a" stroke-width="0.35">Summer discount</text>
<text class="mi" x="890.50" y="955.70" font-size="26.67" fill="#3c3c3c" transform="matrix(1,0,0,1.0700,0,-66.899)" stroke="#3c3c3c" stroke-width="0.40">on button:</text>
<text class="m" x="1063.40" y="955.70" font-size="33.38" fill="#660e7a" transform="matrix(1,0,0,1.0700,0,-66.899)" stroke="#660e7a" stroke-width="0.35">1</text>
<text class="mi" x="1112.20" y="955.70" font-size="26.67" fill="#3c3c3c" transform="matrix(1,0,0,1.0700,0,-66.899)" stroke="#3c3c3c" stroke-width="0.40">Playback</text>
<text class="mbi" x="1253.60" y="955.70" font-size="26.67" fill="#000000" transform="matrix(1,0,0,1.0700,0,-66.899)" stroke="#000000" stroke-width="0.20">Text:</text>
<text class="mi" x="476.50" y="990.20" font-size="26.67" fill="#b0b42c" transform="matrix(1,0,0,1.0700,0,-69.314)" stroke="#b0b42c" stroke-width="0.40">Don&#x27;t worry you can listen to call music while you wait.</text>
<text class="mb" x="477.68" y="1021.80" font-size="23.43" fill="#878787" transform="matrix(1,0,0,1.0700,0,-71.526)" stroke="#878787" stroke-width="0.20">action</text>
<text class="mi" x="420.10" y="1119.90" font-size="26.67" fill="#3c3c3c" transform="matrix(1,0,0,1.0700,0,-78.393)" stroke="#3c3c3c" stroke-width="0.40">Activity:</text>
<text class="m" x="579.20" y="1119.90" font-size="33.38" fill="#660e7a" transform="matrix(1,0,0,1.0700,0,-78.393)" stroke="#660e7a" stroke-width="0.35">Hidden discounts</text>
<text class="mi" x="910.60" y="1119.90" font-size="26.67" fill="#3c3c3c" transform="matrix(1,0,0,1.0700,0,-78.393)" stroke="#3c3c3c" stroke-width="0.40">on button:</text>
<text class="m" x="1084.00" y="1119.90" font-size="33.38" fill="#660e7a" transform="matrix(1,0,0,1.0700,0,-78.393)" stroke="#660e7a" stroke-width="0.35">2</text>
<text class="mi" x="1132.60" y="1119.90" font-size="26.67" fill="#3c3c3c" transform="matrix(1,0,0,1.0700,0,-78.393)" stroke="#3c3c3c" stroke-width="0.40">Playback</text>
<text class="mbi" x="1274.10" y="1119.90" font-size="26.67" fill="#000000" transform="matrix(1,0,0,1.0700,0,-78.393)" stroke="#000000" stroke-width="0.20">Text:</text>
<text class="mi" x="555.90" y="1154.40" font-size="26.67" fill="#b0b42c" transform="matrix(1,0,0,1.0700,0,-80.808)" stroke="#b0b42c" stroke-width="0.40">Secret information.</text>
<text class="mi" x="463.90" y="1188.10" font-size="26.67" fill="#000000" transform="matrix(1,0,0,1.0700,0,-83.167)" stroke="#000000" stroke-width="0.40">Get info</text>
<text class="s" x="56.27" y="33.70" font-size="24.27" fill="#111" stroke="#111" stroke-width="0.30" textLength="108.61" lengthAdjust="spacingAndGlyphs">Jet Mobile</text>
<text class="s" x="1435.79" y="33.90" font-size="23.84" fill="#555" stroke="#555" stroke-width="0.30" textLength="161.57" lengthAdjust="spacingAndGlyphs">Context Actions</text>
<text class="s" x="1462.95" y="139.90" font-size="28.05" fill="#1c1c1c" stroke="#1c1c1c" stroke-width="0.30" textLength="146.10" lengthAdjust="spacingAndGlyphs">Appearance</text>
<text class="s" x="1471.37" y="192.20" font-size="27.18" fill="#1c1c1c" stroke="#1c1c1c" stroke-width="0.30" textLength="106.57" lengthAdjust="spacingAndGlyphs">Move up</text>
<text class="s" x="1472.37" y="226.30" font-size="27.18" fill="#1c1c1c" stroke="#1c1c1c" stroke-width="0.30" textLength="190.19" lengthAdjust="spacingAndGlyphs">Sort Ascending</text>
<text class="s" x="1472.37" y="259.60" font-size="27.18" fill="#1c1c1c" stroke="#1c1c1c" stroke-width="0.30" textLength="203.79" lengthAdjust="spacingAndGlyphs">Sort Descending</text>
<text class="s" x="1462.70" y="323.90" font-size="28.05" fill="#1c1c1c" stroke="#1c1c1c" stroke-width="0.30" textLength="215.12" lengthAdjust="spacingAndGlyphs">Available Buttons</text>
<text class="s" x="1472.63" y="376.00" font-size="27.18" fill="#1c1c1c" stroke="#1c1c1c" stroke-width="0.60">#</text>
<text class="s" x="1472.44" y="410.06" font-size="27.18" fill="#1c1c1c" stroke="#1c1c1c" stroke-width="0.30">0</text>
<text class="s" x="1472.46" y="444.12" font-size="27.18" fill="#1c1c1c" stroke="#1c1c1c" stroke-width="0.30">3</text>
<text class="s" x="1472.88" y="478.18" font-size="27.18" fill="#1c1c1c" stroke="#1c1c1c" stroke-width="0.30">4</text>
<text class="s" x="1472.41" y="512.24" font-size="27.18" fill="#1c1c1c" stroke="#1c1c1c" stroke-width="0.30">5</text>
<text class="s" x="1472.12" y="546.30" font-size="27.18" fill="#1c1c1c" stroke="#1c1c1c" stroke-width="0.30">6</text>
<text class="s" x="1472.11" y="580.36" font-size="27.18" fill="#1c1c1c" stroke="#1c1c1c" stroke-width="0.30">7</text>
<text class="s" x="1472.32" y="614.42" font-size="27.18" fill="#1c1c1c" stroke="#1c1c1c" stroke-width="0.30">8</text>
<text class="s" x="1472.23" y="648.48" font-size="27.18" fill="#1c1c1c" stroke="#1c1c1c" stroke-width="0.30">9</text>
<text class="s" x="1461.87" y="711.90" font-size="28.05" fill="#1c1c1c" stroke="#1c1c1c" stroke-width="0.30" textLength="97.84" lengthAdjust="spacingAndGlyphs">Options</text>
<text class="s" x="1473.15" y="764.20" font-size="27.18" fill="#1c1c1c" stroke="#1c1c1c" stroke-width="0.30" textLength="183.25" lengthAdjust="spacingAndGlyphs">Add new Event</text>
<text class="s" x="1470.97" y="798.40" font-size="27.18" fill="#1c1c1c" stroke="#1c1c1c" stroke-width="0.30" textLength="173.53" lengthAdjust="spacingAndGlyphs">Remove Event</text>
<text class="s" x="1461.43" y="861.60" font-size="28.05" fill="#1c1c1c" stroke="#1c1c1c" stroke-width="0.30" textLength="102.19" lengthAdjust="spacingAndGlyphs">Settings</text>
<text class="s" x="1471.77" y="914.20" font-size="27.18" fill="#1c1c1c" stroke="#1c1c1c" stroke-width="0.30" textLength="157.78" lengthAdjust="spacingAndGlyphs">Hide Toolbar</text>
<text class="s" x="1472.77" y="947.60" font-size="27.18" fill="#1c1c1c" stroke="#1c1c1c" stroke-width="0.30" textLength="122.69" lengthAdjust="spacingAndGlyphs">Step Back</text>
</svg>
</body></html>
